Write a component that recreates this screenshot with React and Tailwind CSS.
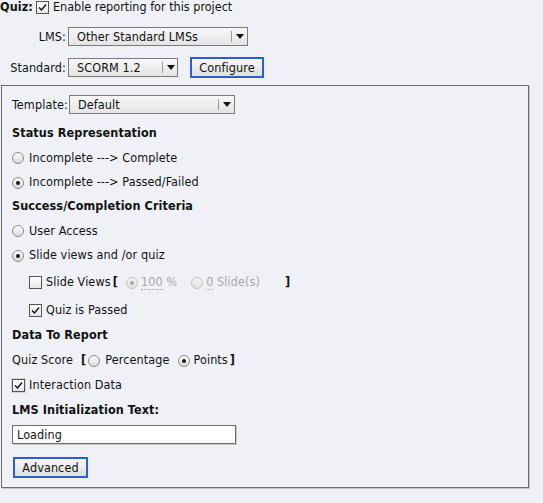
import React from "react";

const font = { fontFamily: '"DejaVu Sans Condensed", "DejaVu Sans", sans-serif' };

function Check({ checked, focus }) {
  return (
    <span
      className={`inline-flex h-[15px] w-[15px] shrink-0 items-center justify-center ${
        focus ? "bg-[#d4d4d4]" : ""
      }`}
    >
      <span className="flex h-[13px] w-[13px] items-center justify-center border border-[#555] bg-gradient-to-b from-white to-[#e6e6e6]">
        {checked && (
          <svg width="9" height="9" viewBox="0 0 9 9">
            <path d="M1 4.5 L3.5 7 L8 1.5" fill="none" stroke="#111" strokeWidth="1.4" />
          </svg>
        )}
      </span>
    </span>
  );
}

function Radio({ checked, disabled }) {
  return (
    <span
      className={`flex h-[12px] w-[12px] shrink-0 items-center justify-center rounded-full border bg-gradient-to-b ${
        disabled
          ? "border-[#c4c4c4] from-[#f4f4f4] to-[#e2e2e2]"
          : "border-[#8a8a8a] from-white to-[#d9d9d9]"
      }`}
    >
      {checked && (
        <span
          className={`h-[4px] w-[4px] rounded-full ${disabled ? "bg-[#a9a9a9]" : "bg-[#1a1a1a]"}`}
        />
      )}
    </span>
  );
}

function Select({ value, width, sep }) {
  return (
    <div
      className="relative flex h-[19px] shrink-0 items-center border border-[#7a7a7a] bg-gradient-to-b from-[#f8f8f8] to-[#e4e4e4] pl-[8px] pt-px text-[#111]"
      style={{ width }}
    >
      <span>{value}</span>
      <span
        className="absolute top-[3px] bottom-[3px] w-px bg-[#9a9a9a]"
        style={{ left: sep }}
      />
      <span
        className="absolute top-0 bottom-0 flex items-center"
        style={{ left: sep + 5 }}
      >
        <svg width="8" height="5" viewBox="0 0 8 5">
          <path d="M0 0 H8 L4 5 Z" fill="#111" />
        </svg>
      </span>
    </div>
  );
}

function Btn({ children, w }) {
  return (
    <div
      className="flex h-[21px] shrink-0 items-center justify-center border-2 border-[#2a5fd0] bg-gradient-to-b from-[#f9f9f9] to-[#dedede] pt-px text-[#111]"
      style={{ width: w }}
    >
      {children}
    </div>
  );
}

function Row({ h, children, className = "" }) {
  return (
    <div className={`flex items-center pt-[3px] ${className}`} style={{ height: h }}>
      {children}
    </div>
  );
}

export default function App() {
  return (
    <div
      className="h-[503px] w-[543px] overflow-hidden bg-[#eff1f6] text-[12.5px] leading-none tracking-[0.1px] text-[#111]"
      style={font}
    >
      {/* Top */}
      <div className="flex h-[14px] items-center pt-px">
        <span className="font-bold">Quiz:</span>
        <span className="ml-[2px]">
          <Check checked />
        </span>
        <span className="ml-[3px] tracking-normal">Enable reporting for this project</span>
      </div>

      <div className="mt-[13px] flex items-center">
        <span className="w-[66px] pt-px text-right">LMS:</span>
        <span className="ml-[2px]">
          <Select value="Other Standard LMSs" width={180} sep={162} />
        </span>
      </div>

      <div className="mt-[11px] flex h-[21px] items-center">
        <span className="w-[66px] pt-px text-right">Standard:</span>
        <span className="ml-[2px]">
          <Select value="SCORM 1.2" width={110} sep={93} />
        </span>
        <span className="ml-[12px]">
          <Btn w={74}>Configure</Btn>
        </span>
      </div>

      {/* Panel */}
      <div className="ml-px mt-[7px] w-[528px] border border-[#6b6b6b] pb-[9px] pl-[10px] shadow-[1px_1px_0_#c8c8c8]">
        <div className="mt-[9px] flex h-[19px] items-center">
          <span className="w-[57px] pt-px">Template:</span>
          <Select value="Default" width={166} sep={148} />
        </div>

        <Row h={24} className="mt-[6px] font-bold">Status Representation</Row>
        <Row h={25}>
          <Radio />
          <span className="ml-[5px]">Incomplete ---&gt; Complete</span>
        </Row>
        <Row h={24}>
          <Radio checked />
          <span className="ml-[5px]">Incomplete ---&gt; Passed/Failed</span>
        </Row>

        <Row h={24} className="font-bold">Success/Completion Criteria</Row>
        <Row h={25}>
          <Radio />
          <span className="ml-[5px]">User Access</span>
        </Row>
        <Row h={24}>
          <Radio checked />
          <span className="ml-[5px]">Slide views and /or quiz</span>
        </Row>
        <Row h={30} className="pl-[16px]">
          <Check />
          <span className="ml-[3px]">Slide Views</span>
          <span className="ml-[2px] font-bold">[</span>
          <span className="ml-[8px]">
            <Radio checked disabled />
          </span>
          <span className="ml-[3px] text-[#a8a8a8]">
            <span className="border-b border-dotted border-[#a8a8a8]">100</span> %
          </span>
          <span className="ml-[14px]">
            <Radio disabled />
          </span>
          <span className="ml-[3px] text-[#a8a8a8]">
            <span className="border-b border-dotted border-[#a8a8a8]">0</span> Slide(s)
          </span>
          <span className="ml-[25px] font-bold">]</span>
        </Row>
        <Row h={26} className="pl-[16px]">
          <Check checked />
          <span className="ml-[3px]">Quiz is Passed</span>
        </Row>

        <Row h={24} className="font-bold">Data To Report</Row>
        <Row h={26}>
          <span>Quiz Score</span>
          <span className="ml-[8px] font-bold">[</span>
          <span className="ml-[2px]">
            <Radio />
          </span>
          <span className="ml-[5px]">Percentage</span>
          <span className="ml-[8px]">
            <Radio checked />
          </span>
          <span className="ml-[4px]">Points</span>
          <span className="ml-[2px] font-bold">]</span>
        </Row>
        <Row h={24} className="-ml-px">
          <Check checked focus />
          <span className="ml-[3px]">Interaction Data</span>
        </Row>
        <Row h={26} className="font-bold">LMS Initialization Text:</Row>

        <div className="mt-[3px] flex h-[19px] w-[224px] items-center border border-[#6b6b6b] bg-white pl-[4px] pt-px shadow-[1px_1px_0_#c8c8c8]">
          Loading
        </div>

        <div className="ml-px mt-[13px]">
          <Btn w={75}>Advanced</Btn>
        </div>
      </div>
    </div>
  );
}
